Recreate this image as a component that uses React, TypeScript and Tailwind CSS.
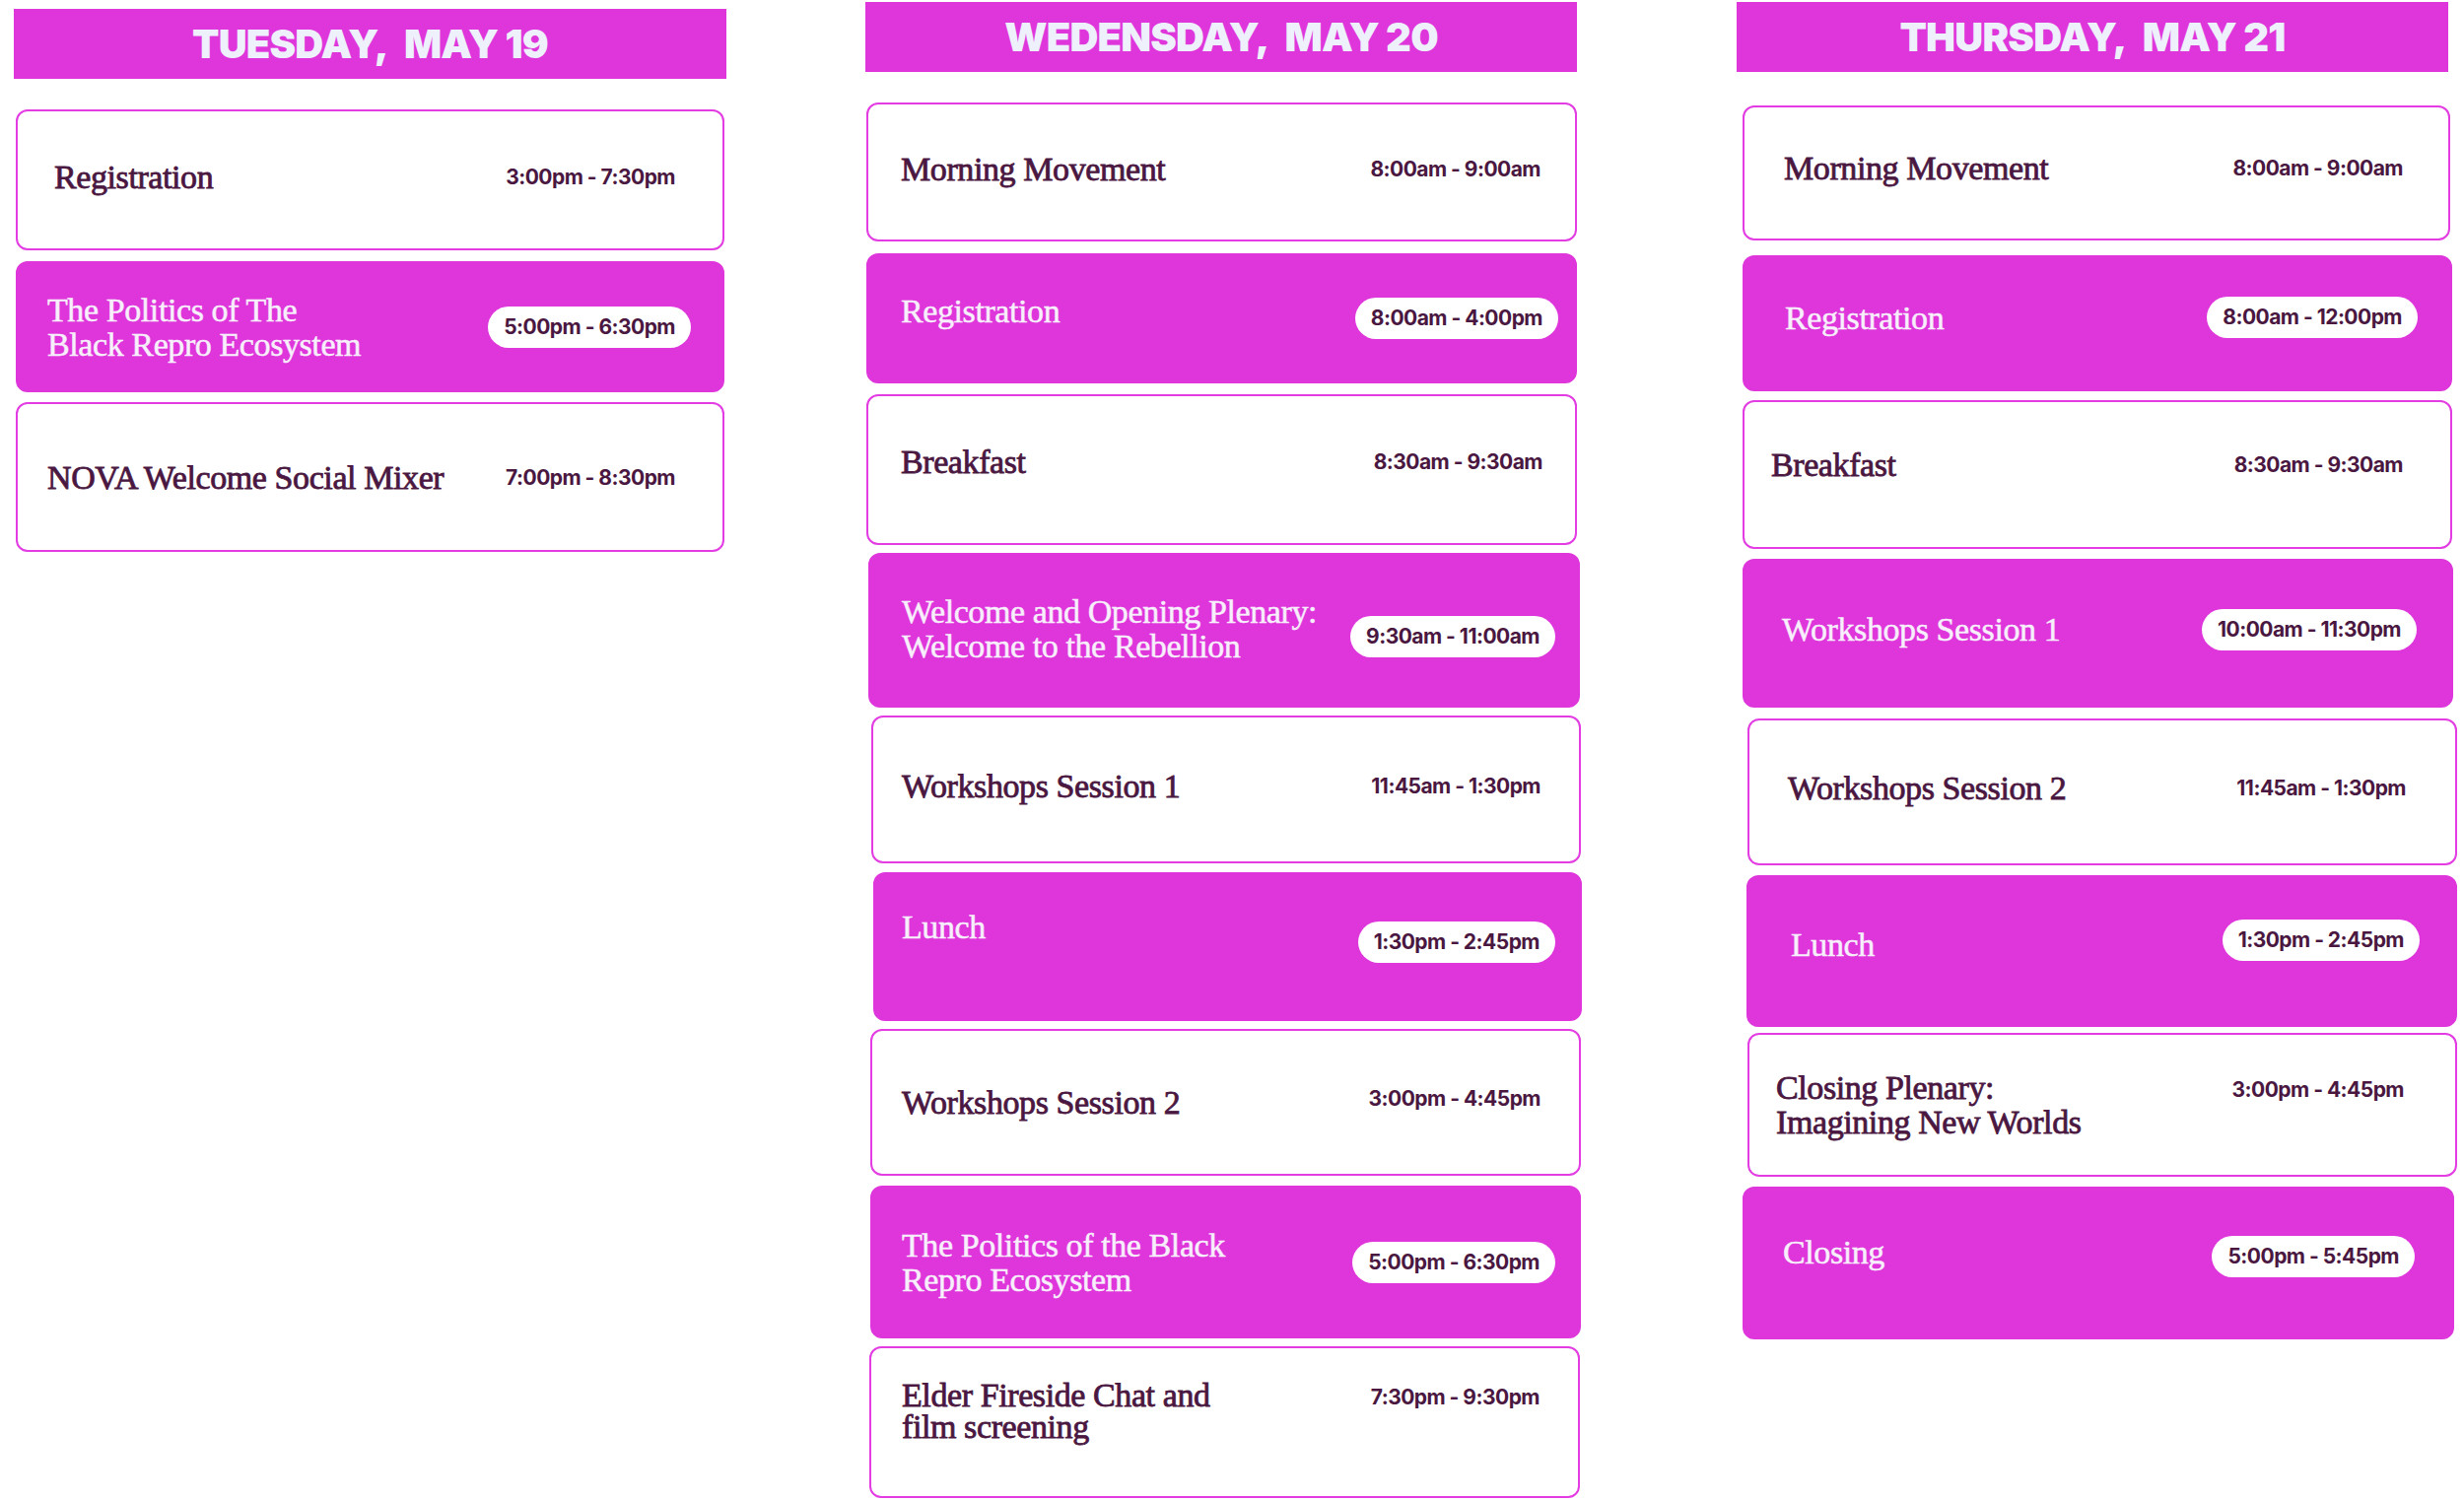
type Item = {
  title: string[];
  time: string;
  filled?: boolean;
  box: string;
  row?: string;
  tt?: string;
  tm?: string;
  lead?: string;
};

type Day = {
  label: string;
  date: string;
  col: string;
  items: Item[];
};

const days: Day[] = [
  {
    label: 'TUESDAY,',
    date: 'MAY 19',
    col: 'ml-[14px] mt-[9px] w-[723px]',
    items: [
      { title: ['Registration'], time: '3:00pm - 7:30pm', box: 'mt-[31px] ml-[2px] w-[719px] h-[143px] pl-[37px] pr-[32px]', row: 'mb-[6px]' },
      { title: ['The Politics of The', 'Black Repro Ecosystem'], time: '5:00pm - 6:30pm', filled: true, box: 'mt-[11px] ml-[2px] w-[719px] h-[133px] pl-[30px] pr-[32px]' },
      { title: ['NOVA Welcome Social Mixer'], time: '7:00pm - 8:30pm', box: 'mt-[10px] ml-[2px] w-[719px] h-[152px] pl-[30px] pr-[32px]' },
    ],
  },
  {
    label: 'WEDENSDAY,',
    date: 'MAY 20',
    col: 'ml-[141px] mt-[2px] w-[722px]',
    items: [
      { title: ['Morning Movement'], time: '8:00am - 9:00am', box: 'mt-[31px] ml-[1px] w-[721px] h-[141px] pl-[33px] pr-[19px]', row: 'mb-[6px]' },
      { title: ['Registration'], time: '8:00am - 4:00pm', filled: true, box: 'mt-[12px] ml-[1px] w-[721px] h-[132px] pl-[33px] pr-[17px]', tt: 'mb-[16px]' },
      { title: ['Breakfast'], time: '8:30am - 9:30am', box: 'mt-[11px] ml-[1px] w-[721px] h-[153px] pl-[33px] pr-[17px]', row: 'mb-[16px]' },
      { title: ['Welcome and Opening Plenary:', 'Welcome to the Rebellion'], time: '9:30am - 11:00am', filled: true, box: 'mt-[8px] ml-[3px] w-[722px] h-[157px] pl-[32px] pr-[23px]', row: 'mb-[4px]', tm: 'mt-[16px]' },
      { title: ['Workshops Session 1'], time: '11:45am - 1:30pm', box: 'mt-[8px] ml-[6px] w-[720px] h-[150px] pl-[29px] pr-[23px]', row: 'mb-[8px]' },
      { title: ['Lunch'], time: '1:30pm - 2:45pm', filled: true, box: 'mt-[9px] ml-[8px] w-[719px] h-[151px] pl-[27px] pr-[25px]', row: 'mb-[10px]', tt: 'mb-[30px]' },
      { title: ['Workshops Session 2'], time: '3:00pm - 4:45pm', box: 'mt-[8px] ml-[5px] w-[721px] h-[149px] pl-[30px] pr-[23px]', tm: 'mt-0' },
      { title: ['The Politics of the Black', 'Repro Ecosystem'], time: '5:00pm - 6:30pm', filled: true, box: 'mt-[10px] ml-[5px] w-[721px] h-[155px] pl-[30px] pr-[24px]' },
      { title: ['Elder Fireside Chat and', 'film screening'], time: '7:30pm - 9:30pm', box: 'mt-[8px] ml-[4px] w-[721px] h-[154px] pl-[31px] pr-[23px]', row: 'mb-[22px]', lead: 'leading-[32px]' },
    ],
  },
  {
    label: 'THURSDAY,',
    date: 'MAY 21',
    col: 'ml-[162px] mt-[2px] w-[722px]',
    items: [
      { title: ['Morning Movement'], time: '8:00am - 9:00am', box: 'mt-[34px] ml-[6px] w-[718px] h-[137px] pl-[40px] pr-[30px]', row: 'mb-[10px]' },
      { title: ['Registration'], time: '8:00am - 12:00pm', filled: true, box: 'mt-[15px] ml-[6px] w-[720px] h-[138px] pl-[41px] pr-[33px]', row: 'mb-[12px]' },
      { title: ['Breakfast'], time: '8:30am - 9:30am', box: 'mt-[9px] ml-[6px] w-[720px] h-[151px] pl-[27px] pr-[32px]', row: 'mb-[20px]' },
      { title: ['Workshops Session 1'], time: '10:00am - 11:30pm', filled: true, box: 'mt-[10px] ml-[6px] w-[721px] h-[151px] pl-[38px] pr-[35px]', row: 'mb-[8px]' },
      { title: ['Workshops Session 2'], time: '11:45am - 1:30pm', box: 'mt-[11px] ml-[11px] w-[720px] h-[149px] pl-[39px] pr-[34px]', row: 'mb-[8px]' },
      { title: ['Lunch'], time: '1:30pm - 2:45pm', filled: true, box: 'mt-[10px] ml-[10px] w-[721px] h-[154px] pl-[43px] pr-[36px]', row: 'mb-[22px]', tt: 'mt-[8px]' },
      { title: ['Closing Plenary:', 'Imagining New Worlds'], time: '3:00pm - 4:45pm', box: 'mt-[6px] ml-[11px] w-[720px] h-[146px] pl-[27px] pr-[36px]', tm: 'mt-[6px]' },
      { title: ['Closing'], time: '5:00pm - 5:45pm', filled: true, box: 'mt-[10px] ml-[6px] w-[722px] h-[155px] pl-[39px] pr-[38px]', row: 'mb-[14px]', tt: 'mb-[8px]' },
    ],
  },
];

function Card({ item }: { item: Item }) {
  const filled = item.filled;
  return (
    <div
      className={`flex items-center rounded-[12px] border-2 ${
        filled ? 'border-[#df36dc] bg-[#df36dc]' : 'border-[#e23ce2] bg-white'
      } ${item.box}`}
    >
      <div
        className={`flex w-full justify-between ${filled ? 'items-center' : 'items-start'} ${item.row ?? ''}`}
      >
        <div
          className={`font-['Liberation_Serif',serif] text-[34px] tracking-[-0.012em] ${item.lead ?? 'leading-[35px]'} ${
            filled
              ? 'text-[#f7effb] [-webkit-text-stroke:0.5px_#f7effb]'
              : 'text-[#4a1741] [-webkit-text-stroke:0.8px_#4a1741]'
          } ${item.tt ?? ''}`}
        >
          {item.title.map((line) => (
            <div key={line}>{line}</div>
          ))}
        </div>
        <div
          className={`shrink-0 px-4 font-['Inter',sans-serif] text-[21px] font-bold tracking-[-0.025em] text-[#4a1741] ${
            filled
              ? 'flex h-[42px] items-center rounded-full bg-white'
              : 'leading-[28px]'
          } ${item.tm ?? (filled ? '' : 'mt-[4px]')}`}
        >
          {item.time}
        </div>
      </div>
    </div>
  );
}

export default function App() {
  return (
    <main className="flex h-[1523px] w-[2500px] items-start overflow-hidden bg-white">
      {days.map((day) => (
        <section key={day.date} className={`flex flex-col ${day.col}`}>
          <div className="flex h-[71px] items-center justify-center bg-[#df36dc]">
            <h2 className="font-['Inter',sans-serif] text-[40px] font-black tracking-[-0.02em] text-[#eef0fb]">
              {day.label}
              <span className="ml-[16px]">{day.date}</span>
            </h2>
          </div>
          {day.items.map((item) => (
            <Card key={item.title.join(' ')} item={item} />
          ))}
        </section>
      ))}
    </main>
  );
}
